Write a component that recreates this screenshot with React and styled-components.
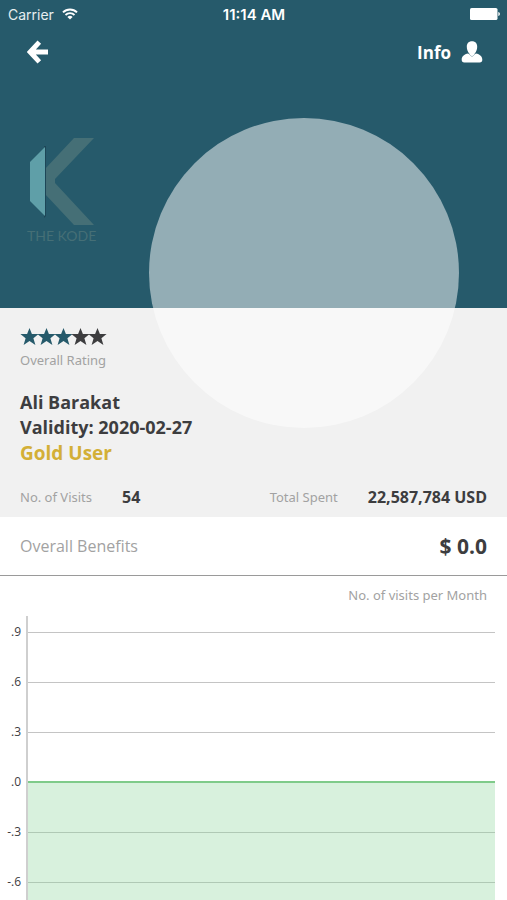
import styled, { createGlobalStyle } from "styled-components";

const stars = [true, true, true, false, false];
const ticks = [".9", ".6", ".3", ".0", "-.3", "-.6"];
const TICK_TOP = 16;
const TICK_STEP = 50;
const ZERO_Y = TICK_TOP + TICK_STEP * 3;

const Chart = () => (
  <ChartSvg role="img" aria-label="No. of visits per Month">
    {ticks.map((tick, i) => {
      const y = TICK_TOP + i * TICK_STEP;
      return (
        <g key={tick}>
          <TickLabel x="21" y={y + 4}>
            {tick}
          </TickLabel>
          <GridLine x="27" y={y} width="100%" height="1" />
        </g>
      );
    })}
    <Area x="27" y={ZERO_Y} width="100%" height="100%" />
    <ZeroLine x="27" y={ZERO_Y - 1} width="100%" height="2" />
    <AxisLine x="26" y="0" width="2" height="100%" />
  </ChartSvg>
);

const App = () => {
  return (
    <>
      <GlobalStyle />
      <Page>
        <Hero>
          <StatusBar>
            <Carrier>
              Carrier
              <svg width="16" height="12" viewBox="0 0 16 12" fill="none">
                <path d="M1 4.400a9.900 9.900 0 0 1 14 0" stroke="#fff" strokeWidth="2" />
                <path d="M3.500 7a6.300 6.300 0 0 1 9 0" stroke="#fff" strokeWidth="1.800" />
                <path d="M8 11.600 5.400 9a3.700 3.700 0 0 1 5.200 0z" fill="#fff" />
              </svg>
            </Carrier>
            <Time>11:14 AM</Time>
            <Battery>
              <svg width="30" height="12" viewBox="0 0 30 12" fill="#fff">
                <rect width="27.500" height="12" rx="1.600" />
                <path d="M28.300 4c1 .2 1.600 1 1.600 2s-.6 1.800-1.600 2z" />
              </svg>
            </Battery>
          </StatusBar>
          <NavBar>
            <NavButton type="button" aria-label="Back">
              <svg width="22" height="24" viewBox="0 0 22 24" fill="none">
                <path
                  d="M12.300 2.200 3.200 12l9.100 9.800M3.500 12H21"
                  stroke="#fff"
                  strokeWidth="4.900"
                />
              </svg>
            </NavButton>
            <NavButton type="button">
              Info
              <svg width="22" height="22" viewBox="0 0 22 22" fill="#fff">
                <path d="M11 .3c3.300 0 5.200 2.200 5.200 5.500 0 2.800-1 5.300-2.500 6.600l-.2 1.200L11 15.400l-2.500-1.800-.2-1.200C6.800 11.100 5.800 8.600 5.800 5.800 5.800 2.500 7.700.3 11 .3z" />
                <path d="M7.200 12.600 11 15.800l3.800-3.200c4.200.8 6.500 2.900 6.500 6.100 0 1.800-.9 2.700-2.600 2.700H3.300c-1.700 0-2.600-.9-2.600-2.700 0-3.200 2.300-5.300 6.500-6.100z" />
              </svg>
            </NavButton>
          </NavBar>
          <Brand>
            <svg width="68" height="90" viewBox="0 0 68 90">
              <path d="M47 1h20L28 42v4l39 42H47L18 57V32z" fill="#456f76" />
              <path d="M17 9v72l2-2V9z" fill="#1d4657" />
              <path d="M3 25 18 10v69L3 64z" fill="#5f9fa8" />
            </svg>
            <BrandName>THE KODE</BrandName>
          </Brand>
          <Avatar />
        </Hero>

        <Profile>
          <Rating aria-label="3 of 5">
            {stars.map((on, i) => (
              <svg key={i} width="17" height="18" viewBox="0 0 17 18" overflow="visible">
                <path
                  d="M8.500 0l2.400 6h6.700l-5.200 4.300 2 6.600-5.900-3.800-5.900 3.800 2-6.600L-.6 6h6.700z"
                  fill={on ? "#265a6b" : "#3d3d3f"}
                />
              </svg>
            ))}
          </Rating>
          <Label>Overall Rating</Label>
          <Details>
            <Name>Ali Barakat</Name>
            <p>Validity: 2020-02-27</p>
            <Tier>Gold User</Tier>
          </Details>
          <Stats>
            <Stat>
              <Label>No. of Visits</Label>
              <Value>54</Value>
            </Stat>
            <Stat>
              <Label>Total Spent</Label>
              <Value>22,587,784 USD</Value>
            </Stat>
          </Stats>
        </Profile>

        <Benefits>
          <span>Overall Benefits</span>
          <Amount>$ 0.0</Amount>
        </Benefits>

        <ChartPanel>
          <ChartTitle>No. of visits per Month</ChartTitle>
          <Chart />
        </ChartPanel>
      </Page>
    </>
  );
};

const GlobalStyle = createGlobalStyle`
  body {
    margin: 0;
    background-color: #fff;
  }
  p, h1, h2 {
    margin: 0;
    font-size: inherit;
  }
  svg {
    display: block;
  }
`;

const Page = styled.main`
  display: flex;
  flex-direction: column;
  height: 100vh;
  overflow: hidden;
  font-family: "Open Sans", sans-serif;
  color: #3d3d3f;
`;

const Hero = styled.header`
  position: relative;
  flex-shrink: 0;
  padding-bottom: 64px;
  background-color: #265a6b;
  color: #fff;
`;

const StatusBar = styled.div`
  display: grid;
  grid-template-columns: 1fr auto 1fr;
  align-items: center;
  height: 28px;
  padding: 0 7px 0 8px;
  font-family: Inter, sans-serif;
  font-size: 14px;
`;

const Carrier = styled.div`
  display: flex;
  align-items: center;
  gap: 8px;
  color: #e6eef0;
`;

const Time = styled.div`
  font-size: 15px;
  font-weight: 600;
`;

const Battery = styled.div`
  justify-self: end;
`;

const NavBar = styled.nav`
  display: flex;
  align-items: center;
  justify-content: space-between;
  height: 48px;
  padding: 0 24px 0 27px;
`;

const NavButton = styled.button`
  display: flex;
  align-items: center;
  gap: 10px;
  padding: 0;
  border: 0;
  background: none;
  color: #fff;
  font-family: inherit;
  font-size: 17px;
  font-weight: 700;
  cursor: pointer;
`;

const Brand = styled.div`
  display: flex;
  flex-direction: column;
  align-items: flex-start;
  padding: 61px 0 0 27px;
`;

const BrandName = styled.span`
  font-family: Lato, sans-serif;
  font-size: 14px;
  line-height: 16px;
  margin-top: 1px;
  color: #456f76;
`;

const Avatar = styled.div`
  position: absolute;
  right: 48px;
  top: 118px;
  width: 310px;
  height: 310px;
  border-radius: 50%;
  background-color: rgba(255, 255, 255, 0.5);
`;

const Profile = styled.section`
  flex-shrink: 0;
  padding: 20px 20px 8px;
  background-color: #f1f1f1;
`;

const Rating = styled.div`
  display: flex;
  margin: 0 0 2px 1px;
`;

const Label = styled.p`
  font-family: "Noto Sans", sans-serif;
  font-size: 13px;
  line-height: 24px;
  color: #a2a2a2;
`;

const Details = styled.div`
  position: relative;
  margin-top: 18px;
  font-size: 18px;
  font-weight: 700;
  line-height: 25px;
`;

const Name = styled.h1`
  font-weight: 700;
`;

const Tier = styled.p`
  font-size: 19px;
  line-height: 27px;
  color: #d3af37;
`;

const Stats = styled.div`
  display: flex;
  justify-content: space-between;
  margin-top: 18px;
`;

const Stat = styled.div`
  display: flex;
  align-items: center;
  gap: 30px;
`;

const Value = styled.span`
  font-size: 16px;
  font-weight: 700;
  line-height: 24px;
`;

const Benefits = styled.section`
  display: flex;
  flex-shrink: 0;
  align-items: center;
  justify-content: space-between;
  height: 58px;
  padding: 0 20px;
  border-bottom: 1px solid #9a9a9a;
  font-size: 16px;
  color: #a2a2a2;
`;

const Amount = styled.span`
  font-size: 21px;
  font-weight: 700;
  color: #3d3d3f;
`;

const ChartPanel = styled.section`
  display: flex;
  flex: 1;
  flex-direction: column;
  min-height: 0;
  padding-right: 12px;
`;

const ChartTitle = styled.h2`
  padding: 7px 8px 9px 0;
  font-family: "Noto Sans", sans-serif;
  font-size: 13px;
  font-weight: 400;
  line-height: 24px;
  text-align: right;
  color: #a2a2a2;
`;

const ChartSvg = styled.svg`
  flex: 1;
  width: 100%;
  min-height: 0;
`;

const TickLabel = styled.text`
  font-size: 12px;
  text-anchor: end;
  fill: #3d3d3f;
`;

const GridLine = styled.rect`
  fill: #c4c4c4;
`;

const AxisLine = styled.rect`
  fill: #cfcfcf;
`;

const ZeroLine = styled.rect`
  fill: #7fcb8a;
`;

const Area = styled.rect`
  fill: rgba(136, 212, 152, 0.33);
`;

export default App;
